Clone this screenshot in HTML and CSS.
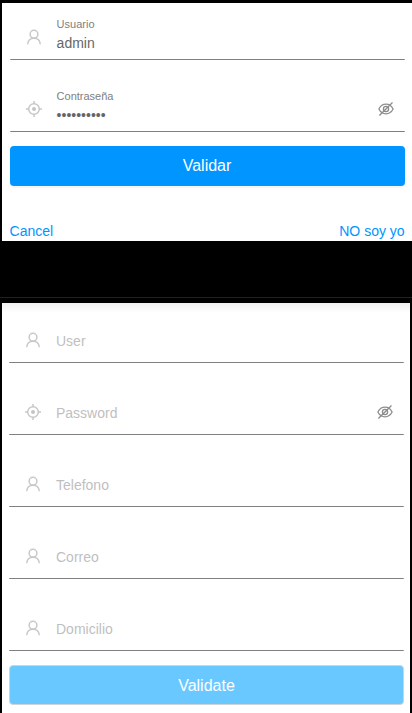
FILE: index.html
```html
<!DOCTYPE html>
<html lang="es">
<head>
<meta charset="utf-8">
<title>Validar</title>
<link rel="stylesheet" href="styles.css">
</head>
<body>
<svg class="defs" width="0" height="0">
  <symbol id="user" viewBox="0 0 16 16"><circle cx="8" cy="5.200" r="3.900"/><path d="M1.700 15.200C2 11.600 4.400 9.200 8 9.200s6 2.400 6.300 6"/></symbol>
  <symbol id="aim" viewBox="0 0 16 16"><circle cx="8" cy="8" r="5.300"/><circle class="dot" cx="8" cy="8" r="2"/><path d="M8 0v3M8 13v3M0 8h3M13 8h3"/></symbol>
  <symbol id="eye" viewBox="0 0 16 16"><path d="M.9 8C2.500 4.800 5 3.200 8 3.200S13.500 4.800 15.100 8C13.500 11.200 11 12.800 8 12.800S2.500 11.200.9 8z"/><circle cx="8" cy="8" r="2.600"/><path d="M1.400 14.500L14.500 1.500M6.800 9.200l2.400-2.400"/></symbol>
</svg>
<section class="card login">
  <div class="field">
    <svg class="icon"><use href="#user"/></svg>
    <div class="content"><span class="label">Usuario</span><span class="value">admin</span></div>
  </div>
  <div class="field">
    <svg class="icon"><use href="#aim"/></svg>
    <div class="content"><span class="label">Contraseña</span><span class="value">••••••••••</span></div>
    <svg class="icon eye"><use href="#eye"/></svg>
  </div>
  <button class="button">Validar</button>
  <div class="links"><a>Cancel</a><a>NO soy yo</a></div>
</section>
<div class="divider"></div>
<section class="card register">
  <div class="field"><svg class="icon"><use href="#user"/></svg><span class="placeholder">User</span></div>
  <div class="field"><svg class="icon"><use href="#aim"/></svg><span class="placeholder">Password</span><svg class="icon eye"><use href="#eye"/></svg></div>
  <div class="field"><svg class="icon"><use href="#user"/></svg><span class="placeholder">Telefono</span></div>
  <div class="field"><svg class="icon"><use href="#user"/></svg><span class="placeholder">Correo</span></div>
  <div class="field"><svg class="icon"><use href="#user"/></svg><span class="placeholder">Domicilio</span></div>
  <button class="button disabled">Validate</button>
</section>
</body>
</html>
```
FILE: styles.css
```css
* { box-sizing: border-box; }
body {
  margin: 0;
  padding-top: 3px;
  height: 713px;
  overflow: hidden;
  background: #000;
  font: 14px/16px "Liberation Sans", Arial, sans-serif;
}
.defs { display: none; }
.card { margin-left: 2px; background: #fff; }
.login { height: 238px; padding: 12px 7px 0 8px; }
.field {
  display: flex;
  align-items: center;
  height: 45px;
  margin-bottom: 27px;
  padding: 0 11px 0 16px;
  border-bottom: 1px solid #808080;
  border-radius: 1px;
}
.icon {
  width: 16px;
  height: 16px;
  flex: none;
  margin-right: 15px;
  fill: none;
  stroke: #c8c8c8;
  stroke-width: 1.5;
}
.login .icon { margin-right: 14.6px; }
.dot { fill: #c4c4c4; stroke: none; }
.icon.eye { margin: 0 0 0 auto; stroke: #8c8c8c; stroke-width: 1.3; }
.content { display: flex; flex-direction: column; padding-bottom: 6px; }
.label { font-size: 11px; line-height: 13px; color: #808080; margin-bottom: 4px; }
.value { color: #666; }
.login .field + .field { margin-bottom: 14px; }
.button {
  display: block;
  width: 100%;
  height: 40px;
  margin: 0;
  padding: 0 1px 0 0;
  border: 0;
  border-radius: 4px;
  background: #0095ff;
  color: #fff;
  font: 16px/18px "Liberation Sans", Arial, sans-serif;
  box-shadow: 0 2px 0 rgba(0, 0, 0, .035);
}
.links {
  display: flex;
  justify-content: space-between;
  margin: 37px .4px 0 -.4px;
  color: #0095ff;
}
.divider {
  height: 62px;
  border-bottom: 5px solid #000;
  background: linear-gradient(#202020, #202020) bottom / 100% 1px no-repeat padding-box;
}
.register {
  height: 410px;
  margin-right: 2px;
  padding: 15px 6px 0 7px;
  background: linear-gradient(#f0f0f0, #fff 10px);
}
.register .field:last-of-type { margin-bottom: 14px; }
.placeholder { padding-top: 2px; color: #bfbfbf; }
.disabled {
  padding: 2px 0 0;
  border: 1px solid #d0d4d8;
  background: #69c8ff;
  box-shadow: none;
}
```
